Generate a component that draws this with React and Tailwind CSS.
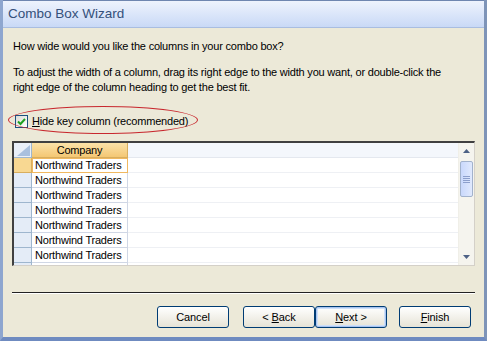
import React from 'react'

const rows = Array.from({ length: 7 })

const Btn = ({ children, focus }) => (
  <button
    className={
      focus
        ? 'w-[72px] h-[22px] rounded-[3px] border border-[#003c74] bg-gradient-to-b from-[#ffffff] to-[#e6e3d6] text-[11px] tracking-[-0.1px] text-black shadow-[inset_0_0_0_1px_#a8c4f0,inset_0_0_0_2px_#cee0f8]'
        : 'w-[72px] h-[22px] rounded-[3px] border border-[#003c74] bg-gradient-to-b from-[#ffffff] to-[#e6e3d6] text-[11px] tracking-[-0.1px] text-black'
    }
  >
    {children}
  </button>
)

const App = () => {
  return (
    <div
      className="w-[487px] h-[341px] flex flex-col bg-[#ece9d8] border-l-[3px] border-r-[3px] border-b-[4px] border-l-[#8ea6cf] border-r-[#7e94b8] border-b-[#6f8bc0] overflow-hidden"
      style={{ fontFamily: '"Liberation Sans", sans-serif' }}
    >
      <div className="h-[28px] shrink-0 flex items-center pl-[5px] bg-gradient-to-b from-[#eef3fd] to-[#c9d9f6] border-b border-[#a9bde0] border-t border-t-[#6f86b0]">
        <span className="text-[13.5px] text-[#34507a]">Combo Box Wizard</span>
      </div>

      <div className="flex-1 flex flex-col px-[9px] text-[11px] tracking-[-0.2px] text-black">
        <p className="mt-[11px] leading-[15px] pl-[1px]">How wide would you like the columns in your combo box?</p>
        <p className="mt-[11px] leading-[15px] pl-[1px] whitespace-nowrap">
          To adjust the width of a column, drag its right edge to the width you want, or double-click the
          <br />
          right edge of the column heading to get the best fit.
        </p>

        <div className="relative mt-[11px] h-[30px] flex items-center pl-[3px]">
          <div className="absolute left-[-4px] top-[0px] w-[190px] h-[28px] rounded-[50%] border border-[#c8282e]" />
          <span className="w-[13px] h-[13px] border border-[#1c5180] bg-gradient-to-br from-[#dcdcd5] to-white flex items-center justify-center">
            <svg width="9" height="9" viewBox="0 0 9 9">
              <path d="M1 4.5 L3.5 7 L8 2" stroke="#21a121" strokeWidth="2" fill="none" />
            </svg>
          </span>
          <span className="ml-[4px]"><u>H</u>ide key column (recommended)</span>
        </div>

        <div className="mt-[5px] h-[125px] flex bg-white border-t-2 border-l-2 border-t-[#404040] border-l-[#404040] border-r border-b border-r-[#d4d0c8] border-b-[#d4d0c8] overflow-hidden">
          <div className="flex-1 flex flex-col">
            <div className="flex h-[15px]">
              <div className="w-[18px] bg-[#e9eff8] border-r border-b border-[#9eb6ce] flex items-end justify-end">
                <svg width="16" height="13" viewBox="0 0 16 13">
                  <polygon points="15,1 15,12 2,12" fill="#a9c0de" />
                </svg>
              </div>
              <div className="w-[96px] bg-gradient-to-b from-[#fbe2a8] to-[#f4c773] border-r border-b border-[#d8ae5e] text-center leading-[14px]">Company</div>
              <div className="flex-1 bg-[#f4f7fc] border-b border-[#e4e8ef]" />
            </div>
            {rows.map((_, i) => (
              <div key={i} className="flex h-[15px]">
                <div
                  className={
                    i === 0
                      ? 'w-[18px] bg-[#f8d892] border-r border-b border-[#d8ae5e]'
                      : 'w-[18px] bg-[#e4ecf7] border-r border-b border-[#9eb6ce]'
                  }
                />
                <div
                  className={
                    i === 0
                      ? 'w-[96px] border border-[#f0b860] pl-[2px] leading-[13px] whitespace-nowrap overflow-hidden'
                      : 'w-[96px] border-r border-b border-[#d0d7e5] pl-[3px] leading-[14px] whitespace-nowrap overflow-hidden'
                  }
                >
                  Northwind Traders
                </div>
                <div className="flex-1 border-b border-[#eef0f4]" />
              </div>
            ))}
            <div className="flex h-[15px]">
              <div className="w-[18px] bg-[#e4ecf7] border-r border-[#9eb6ce]" />
              <div className="w-[96px] border-r border-[#d0d7e5] pl-[3px] leading-[14px] whitespace-nowrap overflow-hidden">Northwind Traders</div>
            </div>
          </div>
          <div className="w-[16px] flex flex-col bg-[#f5f4ee] border-l border-[#f0efe8]">
            <div className="h-[16px] flex items-center justify-center">
              <svg width="7" height="4" viewBox="0 0 7 4"><polygon points="3.5,0 7,4 0,4" fill="#4d6185" /></svg>
            </div>
            <div className="mt-[2px] mx-[1px] h-[36px] rounded-[2px] border border-[#a2b2cc] bg-gradient-to-r from-[#c9d8fc] to-[#e0e9fd] flex flex-col items-center justify-center gap-[1px]">
              <div className="w-[7px] h-px bg-[#8c9fcc]" />
              <div className="w-[7px] h-px bg-[#8c9fcc]" />
              <div className="w-[7px] h-px bg-[#8c9fcc]" />
              <div className="w-[7px] h-px bg-[#8c9fcc]" />
            </div>
            <div className="flex-1" />
            <div className="h-[16px] flex items-center justify-center">
              <svg width="7" height="4" viewBox="0 0 7 4"><polygon points="0,0 7,0 3.5,4" fill="#4d6185" /></svg>
            </div>
          </div>
        </div>

        <div className="mt-[26px] h-[2px] border-t border-t-[#222] border-b border-b-white" />

        <div className="mt-[12px] flex justify-end pr-[4px]">
          <Btn>Cancel</Btn>
          <div className="w-[14px]" />
          <Btn>&lt; <u>B</u>ack</Btn>
          <Btn focus><u>N</u>ext &gt;</Btn>
          <div className="w-[12px]" />
          <Btn><u>F</u>inish</Btn>
        </div>
      </div>
    </div>
  )
}

export default App
